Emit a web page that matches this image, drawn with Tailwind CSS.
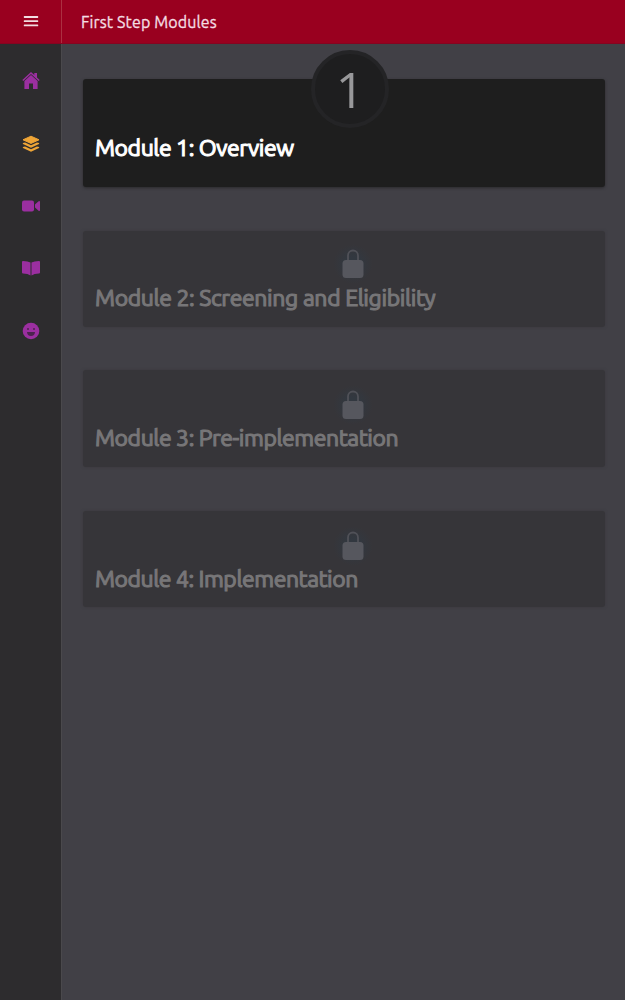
<!DOCTYPE html>
<html lang="en">
<head>
<meta charset="utf-8">
<title>First Step Modules</title>
<script src="https://cdn.jsdelivr.net/npm/@tailwindcss/browser@4"></script>
</head>
<body class="flex h-[1000px] w-[625px] flex-col overflow-hidden bg-[#414046] font-['Ubuntu','Noto_Sans',sans-serif]">
<header class="flex h-11 shrink-0 border-b border-[#850420] bg-[#99001f]">
  <button class="flex w-[62px] items-center justify-center border-r border-[#ac3041]" aria-label="Menu">
    <svg class="-mt-0.5 size-4 fill-[#f2dce1]" viewBox="0 0 16 16"><rect x=".8" y="3" width="14.400" height="1.900" rx=".6"/><rect x=".8" y="7.200" width="14.400" height="1.900" rx=".6"/><rect x=".8" y="11.400" width="14.400" height="1.900" rx=".6"/></svg>
  </button>
  <h1 class="flex items-center whitespace-nowrap pl-[19px] text-base tracking-[0.13px] text-[#f4dde2] [-webkit-text-stroke:0.3px_#f4dde2]"><span>First Step Modules</span></h1>
</header>
<div class="flex flex-1">
  <nav class="flex w-[62px] shrink-0 flex-col items-center gap-[44.5px] border-r border-[#4a494c] bg-[#2d2c2e] pt-[28px]">
    <svg class="size-[18px] shrink-0 fill-[#9b2fa0]" viewBox="0 0 18 18"><path d="M9 0 .3 8l1 1L9 2l7.700 7 1-1L15 5.500V1h-2.700v2.100z"/><path d="M9 2.900 2.400 8.900V17H7v-5.600h4V17h4.600V8.900z"/></svg>
    <svg class="size-[18px] shrink-0 fill-[#efa536]" viewBox="0 0 18 18"><path d="M9 1.200 17 4.800 9 8.400 1 4.800z" stroke="#efa536" stroke-width="1" stroke-linejoin="round"/><path d="m1 8 2-.4 6 2.700 6-2.700 2 .4q.5.500 0 1L9 12.700 1 9q-.5-.5 0-1zM1 12l2-.4 6 2.700 6-2.700 2 .4q.5.500 0 1L9 16.700 1 13q-.5-.5 0-1z"/></svg>
    <svg class="size-[18px] shrink-0 fill-[#9b2fa0]" viewBox="0 0 18 18"><rect y="3.500" width="12" height="11" rx="2"/><path d="m13 7.500 3.600-3.200q1.400-.6 1.400.8v7.800q0 1.400-1.400.8L13 10.500z"/></svg>
    <svg class="size-[18px] shrink-0 -mt-px fill-[#9b2fa0]" viewBox="0 0 18 18"><path d="M0 3q0-1 1-1 5 0 7.500 1.600V16.500Q6 14.600 1 14.600q-1 0-1-1zM18 3q0-1-1-1-5 0-7.500 1.600V16.500Q12 14.600 17 14.600q1 0 1-1z"/></svg>
    <svg class="mt-px size-[18px] shrink-0" viewBox="0 0 18 18"><circle cx="9" cy="9" r="8.300" fill="#9b2fa0"/><g fill="#4b244e"><circle cx="6" cy="7" r="1"/><circle cx="12" cy="7" r="1"/><path d="M5 10h8q-.3 4-4 4t-4-4z"/></g></svg>
  </nav>
  <main class="flex flex-1 flex-col pl-[21px] pr-5 pt-[35px]">
    <section class="relative h-[108px] rounded-[3px] bg-[#1e1e1e] px-3 pt-[52px] shadow-[0_1px_3px_#2b2a2d]">
      <div class="absolute -top-[29px] left-[228px] flex size-[78px] items-center justify-center rounded-full border-4 border-[#242426] bg-[#1e1e1f] font-['Open_Sans',sans-serif] text-[50px] font-normal leading-none text-[#98989a]"><span>1</span></div>
      <h2 class="whitespace-nowrap text-[23px] font-normal leading-[34px] tracking-[-0.42px] text-white [-webkit-text-stroke:1.1px_#fff]"><span>Module 1: Overview</span></h2>
    </section>
    <section class="mt-11 flex h-[96px] flex-col rounded-[3px] bg-[#363539] px-3 pt-[13px] shadow-[0_0_3px_#39383d]">
      <div class="ml-[238px] flex size-10 shrink-0 items-center justify-center rounded-full bg-[radial-gradient(circle,#323840_25%,#363539_70%)]"><svg class="h-[30px] w-[22px]" viewBox="0 0 22 30"><path d="M6 12V6.500a5 5 0 0 1 10 0V12" fill="none" stroke="#505158" stroke-width="1.800"/><rect x=".5" y="11" width="21" height="18" rx="3.500" fill="#56575e"/></svg></div>
      <h2 class="-mt-[3px] whitespace-nowrap text-[23px] font-normal leading-[34px] tracking-[-0.36px] text-[#777678] [-webkit-text-stroke:1.1px_#777678]"><span>Module 2: Screening and Eligibility</span></h2>
    </section>
    <section class="mt-[43px] flex h-[97px] flex-col rounded-[3px] bg-[#363539] px-3 pt-[15px] shadow-[0_0_3px_#39383d]">
      <div class="ml-[238px] flex size-10 shrink-0 items-center justify-center rounded-full bg-[radial-gradient(circle,#323840_25%,#363539_70%)]"><svg class="h-[30px] w-[22px]" viewBox="0 0 22 30"><path d="M6 12V6.500a5 5 0 0 1 10 0V12" fill="none" stroke="#505158" stroke-width="1.800"/><rect x=".5" y="11" width="21" height="18" rx="3.500" fill="#56575e"/></svg></div>
      <h2 class="-mt-1 whitespace-nowrap text-[23px] font-normal leading-[34px] tracking-[-0.42px] text-[#777678] [-webkit-text-stroke:1.1px_#777678]"><span>Module 3: Pre-implementation</span></h2>
    </section>
    <section class="mt-11 flex h-[96px] flex-col rounded-[3px] bg-[#363539] px-3 pt-[15px] shadow-[0_0_3px_#39383d]">
      <div class="ml-[238px] flex size-10 shrink-0 items-center justify-center rounded-full bg-[radial-gradient(circle,#323840_25%,#363539_70%)]"><svg class="h-[30px] w-[22px]" viewBox="0 0 22 30"><path d="M6 12V6.500a5 5 0 0 1 10 0V12" fill="none" stroke="#505158" stroke-width="1.800"/><rect x=".5" y="11" width="21" height="18" rx="3.500" fill="#56575e"/></svg></div>
      <h2 class="-mt-1 whitespace-nowrap text-[23px] font-normal leading-[34px] tracking-[-0.44px] text-[#777678] [-webkit-text-stroke:1.1px_#777678]"><span>Module 4: Implementation</span></h2>
    </section>
  </main>
</div>
</body>
</html>
